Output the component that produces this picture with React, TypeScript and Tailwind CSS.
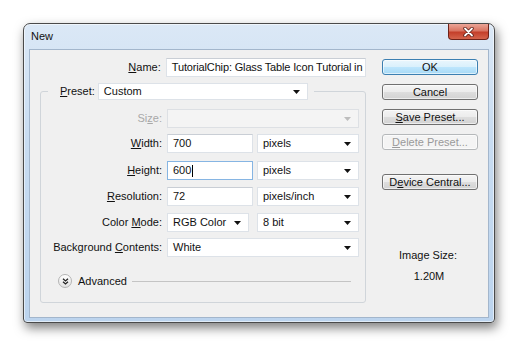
import type { ReactNode } from "react";

function Arrow({ disabled = false }: { disabled?: boolean }) {
  return (
    <svg width="7" height="4" viewBox="0 0 7 4" className="shrink-0">
      <path d="M0 0h7L3.5 4z" fill={disabled ? "#bdbdbd" : "#111"} />
    </svg>
  );
}

function Combo({ value, className = "", disabled = false }: { value?: string; className?: string; disabled?: boolean }) {
  return (
    <div
      className={`flex h-full items-center justify-between border pl-[5px] pr-[7px] ${
        disabled ? "border-[#dde0e4] bg-[#f4f4f4]" : "border-[#dde2e8] bg-white"
      } ${className}`}
    >
      <span className="whitespace-nowrap">{value}</span>
      <Arrow disabled={disabled} />
    </div>
  );
}

function TextBox({ children, className = "", focused = false }: { children: ReactNode; className?: string; focused?: boolean }) {
  return (
    <div
      className={`flex h-full items-center overflow-hidden whitespace-nowrap border bg-white pl-[5px] ${
        focused ? "border-[#86b5e3]" : "border-[#dde2e8] border-t-[#c9ced5]"
      } ${className}`}
    >
      {children}
    </div>
  );
}

function Row({ label, children, className = "" }: { label: ReactNode; children: ReactNode; className?: string }) {
  return (
    <div className={`flex h-[19px] items-center ${className}`}>
      <div className="w-[121px] text-right">{label}</div>
      <div className="ml-[5px] flex h-full gap-[4px]">{children}</div>
    </div>
  );
}

function Button({ children, variant = "normal", className = "" }: { children: ReactNode; variant?: "normal" | "default" | "disabled"; className?: string }) {
  const look = {
    normal:
      "border-[#707070] bg-[linear-gradient(#f4f4f4_0%,#ececec_50%,#dedede_50%,#d2d2d2_100%)] text-[#111]",
    default:
      "border-[#3c7fb1] bg-[linear-gradient(#eaf6fd_0%,#d9f0fc_50%,#bee6fd_50%,#a7d9f5_100%)] text-[#111]",
    disabled: "border-[#b5b8ba] bg-[#f4f4f4] text-[#9a9a9a]",
  }[variant];
  return (
    <div
      className={`flex h-[16px] w-[96px] items-center justify-center rounded-[3px] border shadow-[inset_0_0_0_1px_rgba(255,255,255,0.6)] ${look} ${className}`}
    >
      {children}
    </div>
  );
}

export default function App() {
  return (
    <div className="h-[344px] w-[520px] overflow-hidden bg-white pl-[23px] pt-[23px] font-['Liberation_Sans',Arial,sans-serif] text-[11px] leading-[13px] text-[#111]">
      {/* Window frame */}
      <div className="flex h-[300px] w-[472px] flex-col rounded-b-[4px] rounded-t-[7px] border border-[#4a4a4a] bg-[linear-gradient(180deg,#dbe8f6_0%,#c8dcf1_40%,#bcd4ee_100%)] px-[5px] pb-[4px] shadow-[2px_5px_11px_rgba(0,0,0,0.5),inset_0_0_0_1px_rgba(255,255,255,0.55)]">
        {/* Title bar */}
        <div className="flex h-[25px] items-start justify-between">
          <div className="pl-[2px] pt-[6px] text-[#111]">New</div>
          <div className="flex h-[16px] w-[41px] items-center justify-center rounded-b-[4px] border border-t-0 border-[#6e2218] bg-[linear-gradient(#eba597_0%,#d97562_45%,#c43f2a_55%,#d5644c_100%)]">
            <svg width="11" height="10" viewBox="0 0 11 10">
              <path d="M2 1.5l7 7M9 1.5l-7 7" stroke="#5a1a12" strokeWidth="3.4" strokeLinecap="round" />
              <path d="M2 1.5l7 7M9 1.5l-7 7" stroke="#fff" strokeWidth="1.8" strokeLinecap="round" />
            </svg>
          </div>
        </div>

        {/* Client area */}
        <div className="flex h-[269px] w-[460px] items-start border border-[#a3b6cc] bg-[#f0f0f0]">
          {/* Form */}
          <div className="flex w-[336px] flex-col pt-[8px]">
            <div className="flex h-[19px] items-center">
              <div className="w-[132px] text-right">
                <span className="underline underline-offset-1">N</span>ame:
              </div>
              <TextBox className="ml-[5px] w-[202px]">
                <span className="tracking-[-0.15px]">TutorialChip: Glass Table Icon Tutorial in</span>
              </TextBox>
            </div>

            <fieldset className="ml-[10px] mt-[6px] w-[326px] rounded-[3px] border border-[#d0d5da] pb-[14px]">
              <legend className="ml-[7px] flex h-[17px] items-center pl-[12px] pr-[6px]">
                <span>
                  <span className="underline underline-offset-1">P</span>reset:
                </span>
                <Combo value="Custom" className="ml-[3px] w-[210px]" />
              </legend>

              <Row
                className="mt-[9px] h-[18px]"
                label={
                  <span className="text-[#a8a8a8]">
                    Si<span className="underline underline-offset-1">z</span>e:
                  </span>
                }
              >
                <Combo disabled className="w-[192px]" />
              </Row>

              <Row
                className="mt-[6px]"
                label={
                  <>
                    <span className="underline underline-offset-1">W</span>idth:
                  </>
                }
              >
                <TextBox className="w-[86px]">700</TextBox>
                <Combo value="pixels" className="w-[102px]" />
              </Row>

              <Row
                className="mt-[8px]"
                label={
                  <>
                    <span className="underline underline-offset-1">H</span>eight:
                  </>
                }
              >
                <TextBox focused className="w-[86px]">
                  600<span className="ml-px inline-block h-[12px] w-px bg-black" />
                </TextBox>
                <Combo value="pixels" className="w-[102px]" />
              </Row>

              <Row
                className="mt-[7px]"
                label={
                  <>
                    <span className="underline underline-offset-1">R</span>esolution:
                  </>
                }
              >
                <TextBox className="w-[86px]">72</TextBox>
                <Combo value="pixels/inch" className="w-[102px]" />
              </Row>

              <Row
                className="mt-[7px]"
                label={
                  <>
                    Color <span className="underline underline-offset-1">M</span>ode:
                  </>
                }
              >
                <Combo value="RGB Color" className="w-[82px]" />
                <Combo value="8 bit" className="ml-[4px] w-[102px]" />
              </Row>

              <Row
                className="mt-[6px]"
                label={
                  <>
                    Background <span className="underline underline-offset-1">C</span>ontents:
                  </>
                }
              >
                <Combo value="White" className="w-[192px]" />
              </Row>

              {/* Advanced */}
              <div className="ml-[17px] mr-[14px] mt-[17px] flex h-[14px] items-center">
                <div className="flex h-[14px] w-[14px] items-center justify-center rounded-full border border-[#b4b4b4] bg-[linear-gradient(#ffffff,#e2e2e2)]">
                  <svg width="7" height="7" viewBox="0 0 7 7">
                    <path d="M1 0.8l2.5 2.2L6 0.8M1 3.8l2.5 2.2L6 3.8" fill="none" stroke="#222" strokeWidth="1.2" />
                  </svg>
                </div>
                <span className="ml-[6px]">Advanced</span>
                <div className="ml-[5px] h-px flex-1 bg-[#c4c4c4]" />
              </div>
            </fieldset>
          </div>

          {/* Buttons */}
          <div className="ml-[16px] flex w-[96px] flex-col pt-[9px]">
            <Button variant="default">OK</Button>
            <Button className="mt-[9px]">Cancel</Button>
            <Button className="mt-[9px]">
              <span>
                <span className="underline underline-offset-1">S</span>ave Preset...
              </span>
            </Button>
            <Button variant="disabled" className="mt-[9px]">
              <span>
                <span className="underline underline-offset-1">D</span>elete Preset...
              </span>
            </Button>
            <Button className="mt-[24px]">
              <span>
                D<span className="underline underline-offset-1">e</span>vice Central...
              </span>
            </Button>

            <div className="mt-[59px] pr-[4px] text-center">Image Size:</div>
            <div className="mt-[8px] pr-[2px] text-center">1.20M</div>
          </div>
        </div>
      </div>
    </div>
  );
}
